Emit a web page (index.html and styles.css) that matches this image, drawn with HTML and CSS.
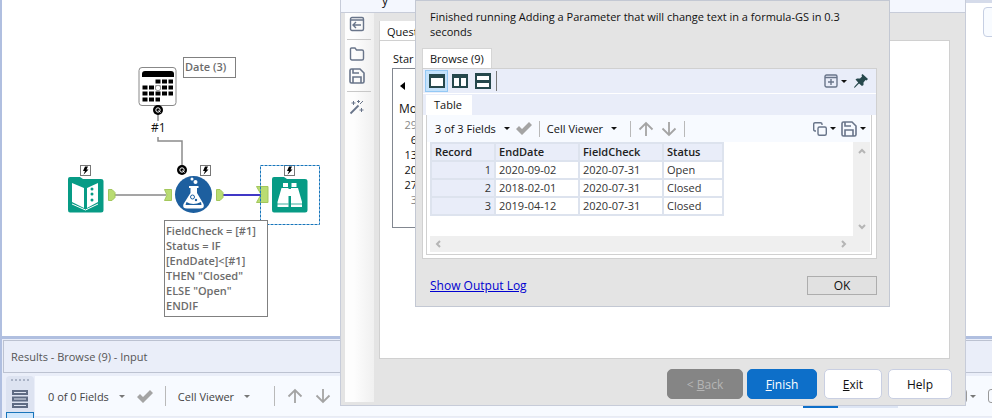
FILE: index.html
```html
<!DOCTYPE html>
<html lang="en">
<head>
<meta charset="utf-8">
<title>Workflow Designer</title>
<link rel="stylesheet" href="styles.css">
</head>
<body>
<svg class="defs" aria-hidden="true">
  <symbol id="save" viewBox="0 0 16 16"><path d="M1 2.500Q1 1 2.500 1H11L15 5V13.500Q15 15 13.500 15H2.500Q1 15 1 13.500ZM4 1V5H10M4 15V9H12V15" fill="none" stroke="currentColor" stroke-width="1.600"/></symbol>
  <symbol id="check" viewBox="0 0 16 13"><path d="M0 7L3 4L6 7L13 0L16 3L6 13Z" fill="currentColor"/></symbol>
  <symbol id="up" viewBox="0 0 16 16"><path d="M8 15V2M1.500 8.500L8 2L14.500 8.500" fill="none" stroke="currentColor" stroke-width="1.800"/></symbol>
  <symbol id="down" viewBox="0 0 16 16"><path d="M8 1V14M1.500 7.500L8 14L14.500 7.500" fill="none" stroke="currentColor" stroke-width="1.800"/></symbol>
  <symbol id="bolt" viewBox="0 0 11 11"><rect x=".5" y=".5" width="10" height="10" fill="#fff" stroke="#777"/><path d="M5 1.500H8L6.500 4.500H8.500L3.500 9.800L5 6H3Z" fill="#000"/></symbol>
</svg>
<div class="app">
  <div class="workspace">
    <main class="canvas">
      <svg class="flow" width="340" height="240" viewBox="0 0 340 240" aria-hidden="true">
        <path d="M158 114V121M158 137V141H182V167" fill="none" stroke="#8c8c8c" stroke-width="1.500"/>
        <path d="M114 195H166" stroke="#a5a5a5" stroke-width="2"/>
        <path d="M222 195H261" stroke="#4038c6" stroke-width="2"/>
        <g fill="#b9dc72" stroke="#a3c75c">
          <path d="M108.500 189.500H112L115 192.500V197.500L112 200.500H108.500Z"/>
          <path d="M216.500 189.500H220L223 192.500V197.500L220 200.500H216.500Z"/>
          <path d="M164.500 189.500H171.500V200.500H164.500L167 195Z"/>
          <path d="M256.500 186.500H268V202.500H256.500L261 194.500Z"/>
        </g>
        <rect x="139" y="67.500" width="37" height="38" rx="3" fill="#fff" stroke="#888"/>
        <path d="M142 77V74Q142 71 145 71H171Q174 71 174 74V77Z"/>
        <path d="M142.500 87.500H173M142.500 93.500H173M155.500 81.500H173M142.500 99.500H160" stroke="#000" stroke-width="4" stroke-dasharray="5 1.500"/>
        <circle cx="158" cy="88" r="2.700" fill="#fff" stroke="#888" stroke-width=".8"/>
        <circle cx="158" cy="110" r="5"/><circle cx="182" cy="170" r="5"/>
        <g fill="none" stroke="#fff" stroke-width="1"><circle cx="158" cy="110" r="2.200"/><circle cx="182" cy="170" r="2.200"/><path d="M158.500 110.500L160.500 112.500M182.500 170.500L184.500 172.500"/></g>
        <path d="M68 179Q68 177 70 177H80L83 179H101Q103.500 179 103.500 181V210Q103.500 212.500 101 212.500H70Q68 212.500 68 210Z" fill="#079b85"/>
        <path d="M72 183L84 188V208L72 202ZM87 188L98 183V202L87 208Z" fill="#fff"/>
        <path d="M72 204L85.500 210L98 204" fill="none" stroke="#fff"/>
        <g fill="#079b85"><circle cx="92" cy="189" r="1.500"/><circle cx="92" cy="194" r="1.500"/><circle cx="92" cy="200" r="1.500"/></g>
        <circle cx="193.500" cy="194.500" r="18.500" fill="#1d5f9f"/>
        <path d="M189 186H198.500V188H197V193L203.500 204Q205 208.500 200 208.500H187Q182 208.500 183.500 204L190.500 193V188H189Z" fill="#fff"/>
        <path d="M186.500 202Q193 206 201 202L201.500 205H185.500Z" fill="#1d5f9f"/>
        <circle cx="192.500" cy="197" r="2" fill="none" stroke="#1d5f9f"/><circle cx="196" cy="200" r="1.200" fill="#1d5f9f"/>
        <circle cx="192" cy="179" r="1.500" fill="#fff"/><circle cx="195.500" cy="182" r="2" fill="#fff"/>
        <path d="M272 179Q272 177 274 177H284L287 179H305Q307.500 179 307.500 181V210Q307.500 212.500 305 212.500H274Q272 212.500 272 210Z" fill="#079b85"/>
        <g fill="#fff"><rect x="283" y="183" width="5" height="4"/><rect x="291.500" y="183" width="5" height="4"/><path d="M281.500 188H288.500V207H277.500V202ZM291 188H298L302 202V207H291Z"/><rect x="288" y="189" width="4" height="7"/></g>
        <path d="M277 204H288.500M291 204H302" stroke="#079b85" stroke-width=".8"/>
        <use href="#bolt" x="80" y="165" width="11" height="11"/><use href="#bolt" x="200" y="165" width="11" height="11"/><use href="#bolt" x="284" y="165" width="11" height="11"/>
        <rect x="260.500" y="165.500" width="59" height="59" fill="none" stroke="#1775bb" stroke-dasharray="3 1"/>
      </svg>
      <div class="note date">Date (3)</div>
      <div class="link-label">#1</div>
      <div class="note formula">FieldCheck = [#1]<br>Status = IF<br>[EndDate]&lt;[#1]<br>THEN "Closed"<br>ELSE "Open"<br>ENDIF</div>
    </main>
    <aside class="side"><div class="side-box"></div></aside>
  </div>
  <section class="results">
    <h2 class="results-title">Results - Browse (9) - Input</h2>
    <div class="results-body">
      <div class="rail"><span class="grip"></span>
        <svg width="18" height="20" viewBox="0 0 18 20"><g fill="#dfe5f2" stroke="#5f6c84" stroke-width="2"><rect x="2" y="2" width="14" height="3"/><rect x="2" y="8.500" width="14" height="3"/><rect x="2" y="15" width="14" height="3"/></g></svg>
        <span class="rail-selected"></span>
      </div>
      <div class="toolbar muted">
        <button class="drop">0 of 0 Fields<i class="caret"></i></button>
        <svg class="gray" width="16" height="13"><use href="#check"/></svg><span class="sep"></span>
        <button class="drop">Cell Viewer<i class="caret"></i></button><span class="sep"></span>
        <svg class="gray arrow" width="16" height="16"><use href="#up"/></svg><svg class="gray arrow" width="16" height="16"><use href="#down"/></svg><span class="sep"></span>
        <div class="segments"><span class="seg on"></span><span class="seg"></span></div>
        <span class="clip-icon"></span><i class="caret"></i><span class="clip-icon last"></span>
      </div>
    </div>
  </section>

  <section class="wizard">
    <header class="wizard-head">y</header>
    <div class="wizard-body">
      <nav class="tools">
        <svg width="16" height="16" viewBox="0 0 16 16" fill="none" stroke="currentColor" stroke-width="1.400"><rect x="1.500" y="1.500" width="13" height="13" rx="1.500"/><path d="M1.500 4H14.500M4 9H12M7 6L4 9L7 12"/></svg>
        <hr>
        <svg width="16" height="14" viewBox="0 0 16 14" fill="none" stroke="currentColor" stroke-width="1.400"><path d="M1.500 2Q1.500 1 2.500 1H6L7.500 3H13Q14.500 3 14.500 4.500V11.500Q14.500 13 13 13H3Q1.500 13 1.500 11.500Z"/></svg>
        <svg width="16" height="16"><use href="#save"/></svg>
        <hr>
        <svg width="16" height="16" viewBox="0 0 16 16" fill="none" stroke="currentColor"><path d="M1.500 14.500L9.500 6.500" stroke-width="1.800"/><path d="M4.500 2V6M2.500 4H6.500M9.500 1V4M8 2.500H11M12.500 9V13M10.500 11H14.500M11 5L14 2" stroke-width="1"/></svg>
      </nav>
      <div class="wizard-main">
        <div class="tab q-tab">Quest</div>
        <div class="page">
          <div class="page-label">Star</div>
          <div class="calendar">
            <svg class="prev" width="5" height="8" viewBox="0 0 5 8"><path d="M5 0V8L0 4Z"/></svg>
            <div class="day">Mo</div>
            <div class="num dim">29</div><div class="num">6</div><div class="num">13</div><div class="num">20</div><div class="num">27</div><div class="num dim">3</div>
          </div>
        </div>
        <footer class="actions">
          <button class="btn back" disabled>&lt; <u>B</u>ack</button>
          <button class="btn finish"><u>F</u>inish</button>
          <button class="btn exit"><u>E</u>xit</button>
          <button class="btn help">Help</button>
        </footer>
      </div>
    </div>
  </section>

  <section class="modal" role="dialog">
    <p class="message">Finished running Adding a Parameter that will change text in a formula-GS in 0.3 <br>seconds</p>
    <div class="tab browse-tab">Browse (9)</div>
    <div class="browse">
      <div class="views">
        <span class="view on"><svg width="16" height="14" viewBox="0 0 16 14"><path d="M1 1H15V13H1ZM1 3H15" fill="#fff" stroke="#26484c" stroke-width="2"/></svg></span>
        <span class="view"><svg width="16" height="14" viewBox="0 0 16 14"><path d="M1 1H15V13H1ZM1 3H15M8 1V13" fill="#fff" stroke="#26484c" stroke-width="2"/></svg></span>
        <span class="view"><svg width="16" height="16" viewBox="0 0 16 16"><path d="M1 1H15V15H1ZM1 2H15M1 9H15" fill="#fff" stroke="#26484c" stroke-width="2"/><path d="M1 8H15" stroke="#26484c" stroke-width="2"/></svg></span>
        <span class="sep dark"></span>
        <span class="end">
          <svg width="14" height="14" viewBox="0 0 14 14" fill="none" stroke="#69758a" stroke-width="1.400"><rect x="1" y="1" width="12" height="12" rx="1.500"/><path d="M1 3.500H13M4 8H10M7 5V11"/></svg><i class="caret"></i>
          <svg class="pin" width="14" height="14" viewBox="0 0 14 14"><path d="M8.500 0L14 5L12.500 6.500L11.500 6L9.500 8.500L9.500 11L8 12L5 9.500L1 13.500L0 14L.5 12.500L4.200 8.500L1.500 5.500L3 4.500L6 4.500L8 2.500L7.500 1Z" fill="#26484c"/></svg>
        </span>
      </div>
      <div class="table-strip"><div class="tab table-tab">Table</div></div>
      <div class="sheet">
        <div class="toolbar">
          <button class="drop">3 of 3 Fields<i class="caret"></i></button>
          <svg class="gray" width="16" height="13"><use href="#check"/></svg><span class="sep"></span>
          <button class="drop">Cell Viewer<i class="caret"></i></button><span class="sep"></span>
          <svg class="gray arrow" width="16" height="16"><use href="#up"/></svg><svg class="gray arrow" width="16" height="16"><use href="#down"/></svg><span class="sep"></span>
          <span class="end slate">
            <svg width="14" height="14" viewBox="0 0 14 14" fill="none" stroke="currentColor" stroke-width="1.400"><rect x="5" y="5" width="8.300" height="8.300" rx="1.500"/><path d="M3 9H2Q.7 9 .7 7.500V2Q.7 .7 2 .7H7.500Q9 .7 9 2V3"/></svg><i class="caret"></i>
            <svg class="save" width="16" height="16"><use href="#save"/></svg><i class="caret"></i>
          </span>
        </div>
        <div class="scroller">
          <div class="grid-area">
            <table>
              <thead><tr><th class="rec">Record</th><th class="date-col">EndDate</th><th class="date-col">FieldCheck</th><th class="status-col">Status</th></tr></thead>
              <tbody>
                <tr><td class="rec">1</td><td>2020-09-02</td><td>2020-07-31</td><td>Open</td></tr>
                <tr><td class="rec">2</td><td>2018-02-01</td><td>2020-07-31</td><td>Closed</td></tr>
                <tr><td class="rec">3</td><td>2019-04-12</td><td>2020-07-31</td><td>Closed</td></tr>
              </tbody>
            </table>
          </div>
          <div class="vbar"><svg width="8" height="6" viewBox="0 0 8 6"><path d="M1 5L4 2L7 5"/></svg><svg width="8" height="6" viewBox="0 0 8 6"><path d="M1 1L4 4L7 1"/></svg></div>
          <div class="hbar"><svg width="6" height="8" viewBox="0 0 6 8"><path d="M5 1L2 4L5 7"/></svg><svg width="6" height="8" viewBox="0 0 6 8"><path d="M1 1L4 4L1 7"/></svg></div>
        </div>
      </div>
    </div>
    <div class="modal-foot"><a href="#log">Show Output Log</a><button class="ok">OK</button></div>
  </section>
</div>
</body>
</html>
```
FILE: styles.css
```css
* { box-sizing: border-box; }
body { margin: 0; font: 12px/15px "Open Sans", "Noto Sans", sans-serif; color: #111; }
button { font: inherit; color: inherit; margin: 0; padding: 0; border: 0; background: none; }
svg { display: block; flex: none; }
.defs { position: absolute; width: 0; height: 0; }
.app { position: relative; display: flex; flex-direction: column; height: 100vh; overflow: hidden; background: #eaeef9; border-left: 2px solid #b0bfe0; }
.workspace { flex: 1; display: flex; border-bottom: 3px solid #b0bfe0; background: #fff; }
.canvas { flex: 1; position: relative; }
.flow { position: absolute; left: -2px; top: 0; }
.note { position: absolute; border: 1px solid #808080; color: #6c6c6c; font-weight: 600; font-size: 11px; white-space: nowrap; background: #fff; }
.date { left: 181px; top: 57px; padding: 1px 9px 3px 1px; }
.formula { left: 162px; top: 220px; padding: 2px 11px 3px 1px; }
.link-label { position: absolute; left: 149px; top: 120px; }
.side { width: 27px; border-top: 3px solid #d5dbea; padding: 4px 0 0 18px; overflow: hidden; }
.side-box { width: 30px; height: 30px; border: 1px solid #c6cfe3; border-radius: 4px; background: #f8fbff; }

.results { padding-top: 1px; }
.results-title { margin: 0 0 3px 1px; padding: 8px 7px; border: 1px solid #bcc2d1; border-right: 0; font-size: 11px; font-weight: 400; line-height: 15px; color: #555; }
.results-body { display: flex; height: 42px; }
.rail { width: 28px; margin: 0 1px 0 4px; background: #dde3f1; border-radius: 4px 4px 0 0; display: flex; flex-direction: column; align-items: center; }
.grip { width: 18px; margin: 3px 0 8px; border-top: 2px dotted #aab3c6; }
.rail-selected { align-self: stretch; flex: 1; margin-top: 3px; border: 1px solid #1775bb; border-bottom: 0; background: #cfe6fb; }
.toolbar { display: flex; align-items: center; flex: 1; background: #f7faff; }
.muted { height: 41px; padding-left: 13px; color: #444; border-bottom: 1px solid #e8ebf3; overflow: hidden; }
.drop { display: flex; align-items: center; white-space: nowrap; font-size: 11px; }
.caret { flex: none; border: 3px solid transparent; border-top-color: #111; border-bottom: 0; }
.drop .caret { margin: 0 6px 0 8px; }
.muted .caret { border-top-color: #777; }
.gray { color: #a4a4a4; }
.sep { flex: none; width: 1px; height: 16px; margin: 0 7px; background: #b9b9b9; }
.muted .sep { height: 20px; margin: 0 12px; }
.arrow + .arrow { margin-left: 7px; }
.muted .arrow + .arrow { margin-left: 12px; }
.muted .drop .caret { margin: 0 12px 0 10px; }
.segments { display: flex; margin: 0 49px 0 auto; }
.seg { width: 60px; height: 24px; border-bottom: 2px solid #dde5f4; }
.seg.on { width: 35px; border-color: #0d6fc9; }
.clip-icon { flex: none; width: 20px; height: 14px; border: 1px solid #999; border-radius: 3px; }
.muted > .caret { margin: 0 12px 0 3px; }
.clip-icon.last { margin-right: -16px; }

.wizard { position: absolute; left: 338px; right: 26px; top: 0; bottom: 12px; display: flex; flex-direction: column; background: #e4e4e4; border: 1px solid #c7ccd9; border-top: 0; }
.wizard-head { height: 13px; padding-left: 41px; line-height: 2px; overflow: hidden; background: #f4f7fe; border-bottom: 1px solid #c7ccd9; }
.wizard-body { flex: 1; display: flex; }
.tools { width: 29px; margin: 0 5px 3px 4px; padding-top: 3px; display: flex; flex-direction: column; align-items: center; color: #69758a; background: linear-gradient(90deg, #fdfdfd 30%, #f0f0f0); }
.tools hr { width: 24px; margin: 7px 0; border: 0; border-top: 1px solid #c8c8c8; }
.tools svg + svg { margin-top: 7px; }
.tools hr + svg { margin-left: -6px; }
.tools > svg { margin-left: -6px; }
.tools hr { margin-left: 2px; align-self: flex-start; }
.wizard-main { flex: 1; display: flex; flex-direction: column; align-items: stretch; padding-top: 8px; }
.tab { align-self: flex-start; background: #fff; font-size: 11px; }
.q-tab { padding: 3px 0 1px 7px; border-left: 1px solid #d5d5d5; }
.page { flex: 1; margin-right: 15px; padding: 10px 12px; background: #fff; border: 1px solid #d0d0d0; }
.page-label { font-size: 11px; padding-left: 1px; }
.calendar { width: 170px; height: 160px; margin-top: 2px; padding: 13px 0 0 6px; border: 1px solid #828790; }
.prev { margin: 0 0 11px 1px; }
.day { padding-bottom: 1px; }
.num { width: 18px; text-align: right; font-size: 11px; }
.dim { color: #888; }
.actions { display: flex; justify-content: flex-end; padding: 10px 13px 6px; }
.btn { height: 30px; border: 1px solid #c9cfe2; border-radius: 5px; background: #fff; }
.back { width: 76px; margin-right: 4px; background: #858585; border-color: #858585; color: #b5b5b5; }
.finish { width: 70px; margin-right: 7px; background: #0d6fc9; border-color: #0d6fc9; color: #fff; }
.exit { width: 58px; margin-right: 6px; }
.help { width: 64px; }

.modal { position: absolute; left: 413px; right: 102px; top: 0; padding: 8px 12px 11px 6px; display: flex; flex-direction: column; background: #e4e4e4; border: 1px solid #c3c8d3; }
.message { margin: 0 0 9px; padding-left: 8px; font-size: 11px; }
.browse-tab { padding: 2px 7px; border: 1px solid #d5d5d5; border-bottom: 0; }
.browse { padding: 0 4px 3px 3px; background: #fff; border: 1px solid #d0d0d0; }
.views { display: flex; align-items: center; height: 25px; margin: 0 -4px 0 -3px; padding-left: 2px; background: #e9edf9; border-bottom: 1px solid #fff; }
.view { width: 23px; height: 22px; display: grid; place-items: center; }
.view.on { background: #c5e2fb; border: 1px solid #94c9f5; }
.sep.dark { height: 20px; margin: 0 2px; background: #777; }
.end { margin-left: auto; display: flex; align-items: center; }
.end .caret { margin-left: 3px; }
.pin { margin: 0 8px 0 7px; }
.table-strip { margin: 0 -4px 0 -3px; padding: 1px 0 0 3px; display: flex; background: #e9edf9; }
.table-tab { padding: 2px 10px 3px 8px; }
.sheet { border: 1px solid #d0d0d0; border-top: 0; padding: 0 1px 2px 3px; }
.sheet .toolbar { height: 27px; margin-left: -3px; padding-left: 8px; }
.slate { color: #69758a; padding-right: 4px; }
.save { margin-left: 5px; }
.scroller { display: grid; grid-template-columns: 1fr 17px; }
.grid-area { height: 94px; }
table { border-collapse: collapse; table-layout: fixed; width: 292px; font-size: 11px; line-height: 14px; color: #333; }
th, td { height: 18px; padding: 1px 3px; border: 2px solid #dde3ee; text-align: left; }
th { font-weight: 600; background: #e9edf9; color: #222; }
td.rec { text-align: right; background: #e9edf9; }
.rec { width: 64px; }
.date-col { width: 84px; }
.status-col { width: 60px; }
.vbar, .hbar { display: flex; justify-content: space-between; align-items: center; background: #efefef; fill: none; stroke: #b5b5b5; stroke-width: 2px; }
.vbar { flex-direction: column; padding: 6px 0; }
.hbar { grid-column: 1 / 3; height: 16px; padding: 0 23px 0 5px; }
.modal-foot { display: flex; justify-content: space-between; align-items: center; margin-top: 17px; padding-left: 8px; }
.modal-foot a { color: #0000d0; }
.ok { width: 70px; height: 19px; border: 1px solid #adadad; background: #e1e1e1; }
```
